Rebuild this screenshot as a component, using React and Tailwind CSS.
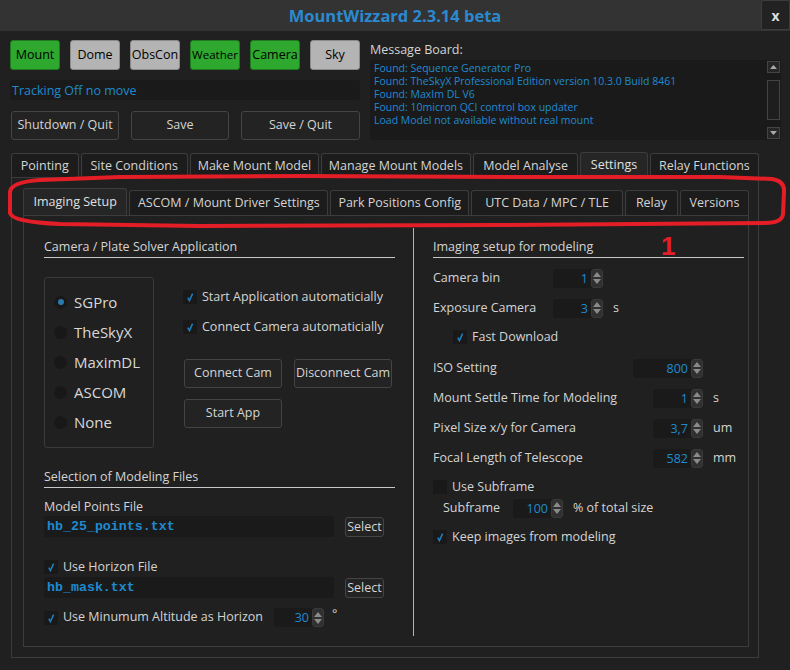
import React from "react";

const font = "font-['Open_Sans','Noto_Sans',sans-serif]";

// top status buttons
const devices = [
  { name: "Mount", on: true },
  { name: "Dome", on: false },
  { name: "ObsCon", on: false },
  { name: "Weather", on: true, small: true },
  { name: "Camera", on: true },
  { name: "Sky", on: false },
];

const messages = [
  "Found: Sequence Generator Pro",
  "Found: TheSkyX Professional Edition version 10.3.0 Build 8461",
  "Found: MaxIm DL V6",
  "Found: 10micron QCI control box updater",
  "Load Model not available without real mount",
];

const mainTabs = [
  { name: "Pointing", w: "w-[68px]" },
  { name: "Site Conditions", w: "w-[108px]" },
  { name: "Make Mount Model", w: "w-[130px]" },
  { name: "Manage Mount Models", w: "w-[151px]" },
  { name: "Model Analyse", w: "w-[106px]" },
  { name: "Settings", w: "w-[68px]", active: true },
  { name: "Relay Functions", w: "w-[110px]" },
];

const subTabs = [
  { name: "Imaging Setup", w: "w-[106px]", active: true },
  { name: "ASCOM / Mount Driver Settings", w: "w-[202px]" },
  { name: "Park Positions Config", w: "w-[141px]" },
  { name: "UTC Data / MPC / TLE", w: "w-[154px]" },
  { name: "Relay", w: "w-[54px]" },
  { name: "Versions", w: "w-[70px]" },
];

const radios = ["SGPro", "TheSkyX", "MaximDL", "ASCOM", "None"];

const Check = ({ checked = true }) => (
  <span className="w-[14px] h-[14px] bg-[#191919] flex items-center justify-center shrink-0">
    {checked && (
      <svg width="10" height="10" viewBox="0 0 10 10">
        <path d="M2.8 5.6 L4.4 8.6 L7.6 1.6" stroke="#1f80c0" strokeWidth="1.5" fill="none" />
      </svg>
    )}
  </span>
);

const Spin = ({ value, w = "w-[50px]" }) => (
  <div className={`${w} h-[19px] bg-[#1a1a1a] rounded-[3px] flex items-stretch`}>
    <span className="flex-1 text-right pr-[3px] text-[#1f8ad0] leading-[19px]">{value}</span>
    <span className="w-[12px] bg-[#303030] border border-[#3a3a3a] rounded-[3px] flex flex-col items-center justify-center gap-[2px]">
      <svg width="8" height="5" viewBox="0 0 8 5"><path d="M0 5 L4 0 L8 5 Z" fill="#8a8a8a" /></svg>
      <svg width="8" height="5" viewBox="0 0 8 5"><path d="M0 0 L4 5 L8 0 Z" fill="#8a8a8a" /></svg>
    </span>
  </div>
);

const DarkBtn = ({ children, className = "" }) => (
  <button className={`bg-[#232323] border border-[#444] rounded-[3px] text-[#d4d4d4] whitespace-nowrap ${className}`}>
    {children}
  </button>
);

const SectionTitle = ({ children }) => (
  <div className="border-b border-[#c8c8c8] pb-[1px] leading-[18px]">{children}</div>
);

export default function App() {
  return (
    <div className={`w-[790px] h-[670px] bg-[#202020] text-[#d4d4d4] text-[12.5px] relative overflow-hidden ${font}`}>
      {/* Title bar */}
      <div className="h-[31px] bg-[#333333] flex items-stretch">
        <div className="w-[29px]" />
        <div className="flex-1 flex items-center justify-center text-[16.5px] font-bold text-[#2a8ad0] pt-[1px]">
          MountWizzard 2.3.14 beta
        </div>
        <div className="w-[29px] h-[30px] bg-[#222] border border-[#3c3c3c] rounded-[2px] flex items-center justify-center text-[#dcdcdc] font-bold text-[14px]">
          x
        </div>
      </div>

      {/* Top area */}
      <div className="flex pl-[10px] pt-[9px]">
        <div className="w-[350px] flex flex-col">
          <div className="flex gap-[10px]">
            {devices.map((d) => (
              <div
                key={d.name}
                className={`w-[50px] h-[30px] rounded-[3px] flex items-center justify-center text-black ${
                  d.small ? "text-[11.5px]" : "text-[12.5px]"
                } ${d.on ? "bg-[#2ea82e] border border-[#1f7a1f]" : "bg-[#b4b4b4] border border-[#8a8a8a]"}`}
              >
                {d.name}
              </div>
            ))}
          </div>
          <div className="mt-[10px] h-[20px] bg-[#1a1a1a] rounded-[2px] text-[#1f8ad0] pl-[2px] leading-[22px]">
            Tracking Off no move
          </div>
          <div className="mt-[11px] flex gap-[12px]">
            <DarkBtn className="w-[108px] h-[29px] ml-[1px]">Shutdown / Quit</DarkBtn>
            <DarkBtn className="w-[98px] h-[29px]">Save</DarkBtn>
            <DarkBtn className="w-[119px] h-[29px]">Save / Quit</DarkBtn>
          </div>
        </div>
        <div className="ml-[10px] w-[411px] flex flex-col">
          <div className="leading-[16px] mt-[2px] text-[#d4d4d4]">Message Board:</div>
          <div className="mt-[2px] h-[80px] bg-[#1a1a1a] flex">
            <div className="flex-1 pl-[4px] pt-[2px] text-[10.5px] leading-[13px] text-[#1f8ad0]">
              {messages.map((m) => (
                <div key={m} className="h-[13px]">{m}</div>
              ))}
            </div>
            <div className="w-[14px] mr-[1px] flex flex-col items-center pt-[1px] pb-[1px] gap-[1px]">
              <div className="w-[13px] h-[12px] border border-[#444] bg-[#262626] flex items-center justify-center">
                <svg width="7" height="4" viewBox="0 0 7 4"><path d="M0 4 L3.5 0 L7 4 Z" fill="#aaa" /></svg>
              </div>
              <div className="w-[13px] h-[5px]" />
              <div className="w-[13px] flex-1 border border-[#444] bg-[#1e1e1e]" />
              <div className="w-[13px] h-[5px]" />
              <div className="w-[13px] h-[12px] border border-[#444] bg-[#262626] flex items-center justify-center">
                <svg width="7" height="4" viewBox="0 0 7 4"><path d="M0 0 L3.5 4 L7 0 Z" fill="#aaa" /></svg>
              </div>
            </div>
          </div>
        </div>
      </div>

      {/* Main tabs */}
      <div className="ml-[11px] mt-[12px] w-[748px]">
        <div className="flex items-end gap-[2px] h-[25px]">
          {mainTabs.map((t) => (
            <div
              key={t.name}
              className={`${t.w} ${
                t.active ? "h-[25px] bg-[#262626] text-[#e0e0e0]" : "h-[24px] bg-[#1c1c1c]"
              } border border-b-0 border-[#3c3c3c] rounded-t-[3px] flex items-center justify-center pt-[1px]`}
            >
              {t.name}
            </div>
          ))}
        </div>
        <div className="h-[481px] border border-[#3c3c3c] pl-[11px] pt-[10px] pr-[9px] pb-[10px] flex flex-col">
          {/* Sub tabs */}
          <div className="flex items-end gap-[2px] h-[27px]">
            {subTabs.map((t) => (
              <div
                key={t.name}
                className={`${t.w} ${
                  t.active ? "h-[27px] bg-[#262626] text-[#e0e0e0]" : "h-[25px] bg-[#1c1c1c]"
                } border border-b-0 border-[#3c3c3c] rounded-t-[3px] flex items-center justify-center`}
              >
                {t.name}
              </div>
            ))}
          </div>
          <div className="flex-1 border border-[#3c3c3c] flex pt-[22px]">
            {/* Left column */}
            <div className="w-[351px] ml-[20px] flex flex-col">
              <SectionTitle>Camera / Plate Solver Application</SectionTitle>
              <div className="flex mt-[19px]">
                <div className="w-[110px] h-[171px] border border-[#3a3a3a] rounded-[3px] flex flex-col pl-[9px] pt-[13px] gap-[8px]">
                  {radios.map((r, i) => (
                    <div key={r} className="flex items-center gap-[7px] h-[22px]">
                      <span className="w-[13px] h-[13px] rounded-full bg-[#181818] flex items-center justify-center">
                        {i === 0 && <span className="w-[6px] h-[6px] rounded-full bg-[#2a7ab0]" />}
                      </span>
                      <span className="text-[15px] text-[#d8d8d8]">{r}</span>
                    </div>
                  ))}
                </div>
                <div className="ml-[29px] flex flex-col pt-[12px]">
                  <div className="flex items-center gap-[5px] h-[16px]">
                    <Check />
                    <span>Start Application automaticially</span>
                  </div>
                  <div className="flex items-center gap-[5px] h-[16px] mt-[14px]">
                    <Check />
                    <span>Connect Camera automaticially</span>
                  </div>
                  <div className="flex gap-[12px] mt-[24px] ml-[1px]">
                    <DarkBtn className="w-[98px] h-[29px]">Connect Cam</DarkBtn>
                    <DarkBtn className="w-[98px] h-[29px]">Disconnect Cam</DarkBtn>
                  </div>
                  <DarkBtn className="w-[98px] h-[29px] mt-[11px] ml-[1px]">Start App</DarkBtn>
                </div>
              </div>

              <div className="mt-[20px]">
                <SectionTitle>Selection of Modeling Files</SectionTitle>
              </div>
              <div className="mt-[10px] leading-[18px]">Model Points File</div>
              <div className="flex items-center">
                <div className="w-[290px] h-[21px] bg-[#1a1a1a] rounded-[2px] pl-[3px] font-['Liberation_Mono',monospace] font-bold text-[13.3px] text-[#1f8ad0] leading-[21px]">
                  hb_25_points.txt
                </div>
                <DarkBtn className="ml-[11px] w-[39px] h-[20px] leading-[18px]">Select</DarkBtn>
              </div>
              <div className="flex items-center gap-[5px] mt-[22px] h-[16px]">
                <Check />
                <span>Use Horizon File</span>
              </div>
              <div className="flex items-center mt-[2px]">
                <div className="w-[290px] h-[21px] bg-[#1a1a1a] rounded-[2px] pl-[3px] font-['Liberation_Mono',monospace] font-bold text-[13.3px] text-[#1f8ad0] leading-[21px]">
                  hb_mask.txt
                </div>
                <DarkBtn className="ml-[11px] w-[39px] h-[20px] leading-[18px]">Select</DarkBtn>
              </div>
              <div className="flex items-center mt-[10px]">
                <Check />
                <span className="ml-[5px] w-[211px]">Use Minumum Altitude as Horizon</span>
                <Spin value="30" />
                <span className="ml-[8px] -mt-[6px]">°</span>
              </div>
            </div>

            {/* Separator */}
            <div className="ml-[18px] w-[1px] bg-[#b4b4b4] mb-[10px] -mt-[10px]" />

            {/* Right column */}
            <div className="ml-[19px] w-[311px] flex flex-col">
              <SectionTitle>Imaging setup for modeling</SectionTitle>
              <div className="flex items-center mt-[10px] h-[20px]">
                <span className="w-[120px]">Camera bin</span>
                <Spin value="1" />
              </div>
              <div className="flex items-center mt-[10px] h-[20px]">
                <span className="w-[120px]">Exposure Camera</span>
                <Spin value="3" />
                <span className="ml-[10px]">s</span>
              </div>
              <div className="flex items-center gap-[5px] ml-[20px] mt-[11px] h-[16px]">
                <Check />
                <span>Fast Download</span>
              </div>
              <div className="flex items-center mt-[13px] h-[20px]">
                <span className="w-[200px]">ISO Setting</span>
                <Spin value="800" w="w-[70px]" />
              </div>
              <div className="flex items-center mt-[10px] h-[20px]">
                <span className="w-[220px]">Mount Settle Time for Modeling</span>
                <Spin value="1" />
                <span className="ml-[10px]">s</span>
              </div>
              <div className="flex items-center mt-[10px] h-[20px]">
                <span className="w-[220px]">Pixel Size x/y for Camera</span>
                <Spin value="3,7" />
                <span className="ml-[10px]">um</span>
              </div>
              <div className="flex items-center mt-[10px] h-[20px]">
                <span className="w-[220px]">Focal Length of Telescope</span>
                <Spin value="582" />
                <span className="ml-[10px]">mm</span>
              </div>
              <div className="flex items-center gap-[5px] mt-[11px] h-[16px]">
                <Check checked={false} />
                <span>Use Subframe</span>
              </div>
              <div className="flex items-center mt-[3px] h-[20px] ml-[10px]">
                <span className="w-[70px]">Subframe</span>
                <Spin value="100" />
                <span className="ml-[10px]">% of total size</span>
              </div>
              <div className="flex items-center gap-[5px] mt-[11px] h-[16px]">
                <Check />
                <span>Keep images from modeling</span>
              </div>
            </div>
          </div>
        </div>
      </div>

      {/* Red annotation around sub tabs */}
      <svg className="absolute left-0 top-0 pointer-events-none" width="790" height="670">
        <path
          d="M40 180 L120 177 L300 176 L520 177 L720 177 L772 179 Q785 181 784 192 L783 214 Q782 223 765 223 L500 225 L200 226 L60 224 Q12 222 10 213 L10 192 Q11 182 40 180 Z"
          stroke="#e41e26"
          strokeWidth="4"
          fill="none"
        />
      </svg>
      <div className="absolute left-[661px] top-[231px] text-[#e41e26] font-bold text-[26px] font-['Liberation_Sans',sans-serif] leading-[30px]">
        1
      </div>
    </div>
  );
}
